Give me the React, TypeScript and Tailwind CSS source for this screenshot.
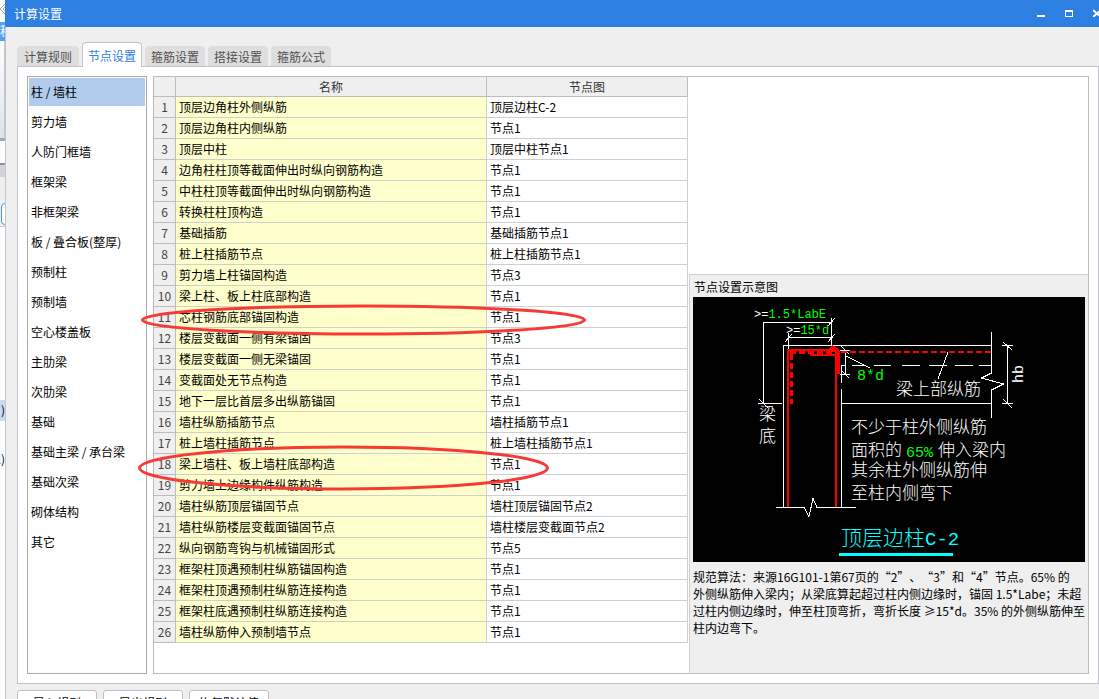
import { useState } from "react";
import clsx from "clsx";

const tabs = ["计算规则", "节点设置", "箍筋设置", "搭接设置", "箍筋公式"];

const categories = [
  "柱 / 墙柱",
  "剪力墙",
  "人防门框墙",
  "框架梁",
  "非框架梁",
  "板 / 叠合板(整厚)",
  "预制柱",
  "预制墙",
  "空心楼盖板",
  "主肋梁",
  "次肋梁",
  "基础",
  "基础主梁 / 承台梁",
  "基础次梁",
  "砌体结构",
  "其它",
];

const rows: [string, string][] = [
  ["顶层边角柱外侧纵筋", "顶层边柱C-2"],
  ["顶层边角柱内侧纵筋", "节点1"],
  ["顶层中柱", "顶层中柱节点1"],
  ["边角柱柱顶等截面伸出时纵向钢筋构造", "节点1"],
  ["中柱柱顶等截面伸出时纵向钢筋构造", "节点1"],
  ["转换柱柱顶构造", "节点1"],
  ["基础插筋", "基础插筋节点1"],
  ["桩上柱插筋节点", "桩上柱插筋节点1"],
  ["剪力墙上柱锚固构造", "节点3"],
  ["梁上柱、板上柱底部构造", "节点1"],
  ["芯柱钢筋底部锚固构造", "节点1"],
  ["楼层变截面一侧有梁锚固", "节点3"],
  ["楼层变截面一侧无梁锚固", "节点1"],
  ["变截面处无节点构造", "节点1"],
  ["地下一层比首层多出纵筋锚固", "节点1"],
  ["墙柱纵筋插筋节点", "墙柱插筋节点1"],
  ["桩上墙柱插筋节点", "桩上墙柱插筋节点1"],
  ["梁上墙柱、板上墙柱底部构造", "节点1"],
  ["剪力墙上边缘构件纵筋构造", "节点1"],
  ["墙柱纵筋顶层锚固节点", "墙柱顶层锚固节点2"],
  ["墙柱纵筋楼层变截面锚固节点", "墙柱楼层变截面节点2"],
  ["纵向钢筋弯钩与机械锚固形式", "节点5"],
  ["框架柱顶遇预制柱纵筋锚固构造", "节点1"],
  ["框架柱顶遇预制柱纵筋连接构造", "节点1"],
  ["框架柱底遇预制柱纵筋连接构造", "节点1"],
  ["墙柱纵筋伸入预制墙节点", "节点1"],
];

const actions = ["导入规则", "导出规则", "恢复默认值"];

function BackgroundStrip() {
  return (
    <div className="w-[5px] shrink-0 overflow-hidden whitespace-nowrap bg-white" aria-hidden="true">
      <svg className="block h-[22px] w-[5px]" viewBox="0 0 5 22" fill="none" stroke="#aaa">
        <path d="M5 4 0 9l5 5M5 7 3 9l2 2" />
      </svg>
      <div className="h-[19px] bg-[#56a0f0] text-white">程</div>
      <div className="h-[97px] border-r border-[#c3c8cf] bg-linear-to-b from-white to-[#dfe3e6]" />
      <div className="h-[3px] bg-[#a5a9ac]" />
      <div className="h-[22px]" />
      <div className="h-[2px] bg-[#8f9295]" />
      <div className="h-3 bg-[#d0d3dc]" />
      <div className="h-[50px] border-b border-[#c3c8cf] bg-[#efefef] pt-[26px] pl-px">
        <div className="h-[22px] w-4 rounded border border-[#4a94e6] bg-white" />
      </div>
      <div className="mt-[173px] flex h-[21px] items-center justify-end bg-[#c9dcf5] pb-[2px]">)</div>
      <div className="mt-[28px] flex h-[21px] items-center justify-end pb-[2px]">l)</div>
    </div>
  );
}

function TitleBar() {
  return (
    <header className="flex h-[27px] items-center justify-between overflow-hidden bg-[#2d80e2] pb-px pl-[9px] text-white">
      <h1>计算设置</h1>
      <div className="-mr-[2px] flex shrink-0 gap-5">
        <button type="button" aria-label="最小化">
          <svg className="block size-2" viewBox="0 0 8 8">
            <path d="M0 6h8v2H0z" fill="#fff" />
          </svg>
        </button>
        <button type="button" aria-label="最大化">
          <svg className="block size-2" viewBox="0 0 8 8">
            <path d="M0 1h8v7H0zM1 3v4h6V3z" fill="#fff" fillRule="evenodd" />
          </svg>
        </button>
        <button type="button" aria-label="关闭">
          <svg className="block size-2" viewBox="0 0 8 8" stroke="#fff" strokeWidth="2">
            <path d="M0 1l8 7M8 1 0 8" />
          </svg>
        </button>
      </div>
    </header>
  );
}

function NodeDiagram() {
  return (
    <svg
      className="block w-full bg-black font-['Noto_Sans_CJK_SC',sans-serif] font-light"
      viewBox="0 0 392 265"
      role="img"
      aria-label="顶层边柱C-2"
    >
      {/* column and beam outline */}
      <g fill="none" stroke="#fff" shapeRendering="crispEdges">
        <path d="M90.5 210V48.5h208M148.5 68v18M148.5 92v118M148 106.5h150" />
        <path d="M148 68.5h5M159 68.5h12M181 68.5h17M209 68.5h18M236 68.5h18M262 68.5h18M286 68.5h12" />
        <path d="M298.5 35v41l-10 5 22 6-12 6v28" />
        <path d="M83 210.5h28l5 9 4-18 4 9h39" />
        {/* dimensions */}
        <path d="M138 25.5H70.5V106M65 106.5h24M66 102l9 9M138.5 21v30M135 29l7-8" />
        <path d="M95.5 36v17M95 40.5h43M92 45l7-8M135 45l7-8" />
        <path d="M152.5 53v24M147 53.5h10M147 77.5h10M148 49l8 8M148 73l8 8M153 59l24 12" />
        <path d="M314.5 48v58M309 48.5h11M309 106.5h11M310 45l9 8M310 102l9 9M255 55l-10 27" />
      </g>
      {/* rebar */}
      <g fill="none" stroke="#f00" strokeWidth="2" shapeRendering="crispEdges">
        <path d="M95 210V53h50v24M143 57v153M117 58h27" />
        <path d="M97 55h47M98 57v50" strokeWidth="3" strokeDasharray="6 3" />
        <path d="M148 55h151" strokeDasharray="6 3" />
        <path d="M136 52l3-4 7 4v3h-10z" fill="#f00" stroke="none" />
        <path d="M146 54v23" />
      </g>
      <g fill="#fff" fontSize="17">
        <text x="203" y="98">梁上部纵筋</text>
        <text x="66" y="123">梁</text>
        <text x="66" y="145">底</text>
        <text x="158" y="136">不少于柱外侧纵筋</text>
        <text x="158" y="159">面积的</text>
        <text x="245" y="159">伸入梁内</text>
        <text x="158" y="179">其余柱外侧纵筋伸</text>
        <text x="158" y="202">至柱内侧弯下</text>
      </g>
      <g className="font-['Liberation_Mono',monospace] font-normal" fill="#0f0" fontSize="12">
        <text x="61" y="21">
          <tspan fill="#fff">&gt;=</tspan>1.5*LabE
        </text>
        <text x="93" y="37">
          <tspan fill="#fff">&gt;=</tspan>15*d
        </text>
        <text x="164" y="83" fontSize="15">8*d</text>
        <text x="213" y="160" fontSize="15">65%</text>
        <text transform="translate(330 86) rotate(-90)" fill="#fff" fontSize="15">hb</text>
      </g>
      <text x="148" y="248" fill="#0ff" fontSize="21">
        顶层边柱<tspan className="font-['Liberation_Mono',monospace]" fontSize="19">C-2</tspan>
      </text>
      <path d="M146 257.5h114" stroke="#0ff" strokeWidth="3" />
    </svg>
  );
}

function NodeTable() {
  return (
    <div className="relative w-[534px] shrink-0">
      <table className="w-full table-fixed border-separate border-spacing-0">
        <colgroup>
          <col className="w-[22px]" />
          <col className="w-[311px]" />
          <col />
        </colgroup>
        <thead>
          <tr className="h-5 bg-[#efefef] text-[#333]">
            <th className="border-r border-b border-[#bdbdbd] p-0" aria-label="序号" />
            <th className="border-r border-b border-[#bdbdbd] p-0 font-normal">名称</th>
            <th className="border-r border-b border-[#bdbdbd] p-0 font-normal">节点图</th>
          </tr>
        </thead>
        <tbody>
          {rows.map(([name, node], i) => (
            <tr key={name} className="h-[21px]">
              <th className="border-r border-b border-[#bdbdbd] bg-[#efefef] p-0 pb-[2px] font-normal text-[#444]">
                {i + 1}
              </th>
              <td className="border-r border-b border-[#cfcfcf] bg-[#ffffcc] p-0 pb-[2px] pl-[3px]">{name}</td>
              <td className="border-r border-b border-[#cfcfcf] p-0 pb-[2px] pl-[3px]">{node}</td>
            </tr>
          ))}
        </tbody>
      </table>
      {/* hand-drawn marks around rows 11 and 18 */}
      <svg
        className="pointer-events-none absolute top-0 -left-4 h-[430px] w-[460px]"
        viewBox="0 0 460 430"
        fill="none"
        stroke="#f83a36"
        strokeWidth="3"
        aria-hidden="true"
      >
        <ellipse cx="225.5" cy="243" rx="221" ry="14" />
        <ellipse cx="205.5" cy="391" rx="204" ry="21" />
      </svg>
    </div>
  );
}

export default function App() {
  const [tab, setTab] = useState(1);
  const [category, setCategory] = useState(0);

  return (
    <div className="flex h-screen overflow-hidden bg-[#efefef] font-['Noto_Sans_CJK_SC',sans-serif] text-[12px] leading-[17px] text-black">
      <BackgroundStrip />
      <div className="min-w-0 flex-1">
        <TitleBar />
        <main className="border-l border-[#bfc5d3] pt-[15px] pl-[11px]">
          <div className="flex items-end gap-[3px]" role="tablist">
            {tabs.map((label, i) => (
              <button
                key={label}
                type="button"
                role="tab"
                aria-selected={i === tab}
                onClick={() => setTab(i)}
                className={clsx(
                  "rounded-t text-center whitespace-nowrap",
                  i === 0 ? "w-[62px]" : "w-[60px]",
                  i === tab
                    ? "relative -mb-px h-[25px] border border-b-0 border-[#c3c3cb] bg-white text-[#2d80e2]"
                    : "h-5 bg-[#dedede] text-[#505050]"
                )}
              >
                {label}
              </button>
            ))}
          </div>

          <div className="flex gap-[6px] border border-[#c3c3cb] bg-white p-[9px]">
            <nav className="w-[120px] shrink-0 border border-[#ababab]">
              {categories.map((label, i) => (
                <button
                  key={label}
                  type="button"
                  onClick={() => setCategory(i)}
                  className={clsx(
                    "mx-px my-px mb-[2px] block h-7 w-[116px] pb-[2px] pl-[2px] text-left whitespace-nowrap",
                    i === category && "bg-[#b1cbed]"
                  )}
                >
                  {label}
                </button>
              ))}
            </nav>

            <div className="flex min-w-0 flex-1 border border-[#bdbdbd]">
              <NodeTable />
              <div className="ml-px flex min-w-0 flex-1 flex-col">
                <div className="h-[197px]" />
                <section className="min-h-[399px] border-t border-l border-[#d0d0d0] bg-[#efefef] px-[3px] pt-[3px]">
                  <h2 className="mb-[2px] pl-px">节点设置示意图</h2>
                  <NodeDiagram />
                  <p className="mt-[6px] whitespace-nowrap [text-spacing-trim:space-all]">
                    规范算法：来源16G101-1第67页的“2”、“3”和“4”节点。65% 的
                    <br />
                    外侧纵筋伸入梁内；从梁底算起超过柱内侧边缘时，锚固 1.5*Labe；未超
                    <br />
                    过柱内侧边缘时，伸至柱顶弯折，弯折长度 ≥15*d。35% 的外侧纵筋伸至
                    <br />
                    柱内边弯下。
                  </p>
                </section>
              </div>
            </div>
          </div>

          <div className="mt-[6px] flex gap-[6px]">
            {actions.map((label) => (
              <button
                key={label}
                type="button"
                className="h-[26px] w-20 rounded-[3px] border border-[#c0c0c4] bg-white pb-[2px]"
              >
                {label}
              </button>
            ))}
          </div>
        </main>
      </div>
    </div>
  );
}
